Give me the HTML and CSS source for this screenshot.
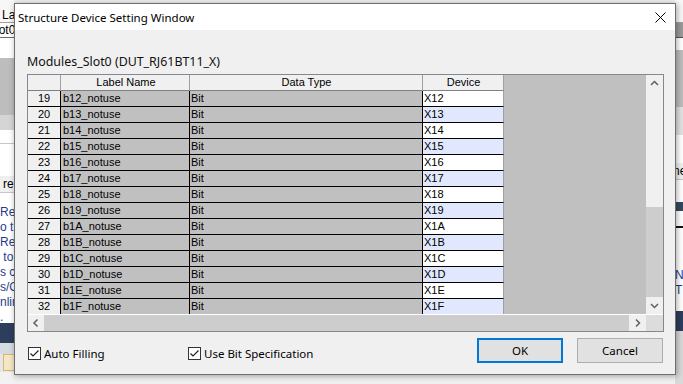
FILE: index.html
```html
<!DOCTYPE html>
<html lang="en">
<head>
  <meta charset="UTF-8">
  <title>Structure Device Setting Window</title>
  <link rel="stylesheet" href="styles.css">
</head>
<body>
  <!-- the application window behind the dialog -->
  <div class="desktop">
    <div class="pane pane-left">
      <div class="bg-head">Lab</div>
      <div class="bg-row shift">Slot0</div>
      <div class="bg-blank h20"></div>
      <div class="bg-gray"></div>
      <div class="bg-light"></div>
      <div class="bg-blank h14 ruled"></div>
      <div class="bg-blank h32"></div>
      <div class="bg-row soft">re</div>
      <div class="bg-notes">
        <p>Res</p>
        <p>o t</p>
        <p>Ref</p>
        <p>&nbsp;to</p>
        <p>s c</p>
        <p>s/G</p>
        <p>nlin</p>
        <p>.</p>
      </div>
      <div class="bg-navy"></div>
      <div class="bg-bar"></div>
      <div class="bg-toolbar"><span class="bg-btn"></span></div>
      <div class="bg-foot"></div>
    </div>
    <div class="pane pane-right">
      <div class="bg-head"></div>
      <div class="bg-row dark"></div>
      <div class="bg-blank h12"></div>
      <div class="bg-gray"></div>
      <div class="bg-light tall"></div>
      <div class="bg-blank h28"></div>
      <div class="bg-row soft shift2">ne</div>
      <div class="bg-blank h22"></div>
      <div class="bg-chip"></div>
      <div class="bg-blank h17 black"></div>
      <div class="bg-notes right">
        <p>N</p>
        <p>T</p>
      </div>
      <div class="bg-navy"></div>
      <div class="bg-foot gray"></div>
    </div>
  </div>

  <div class="dialog">
    <div class="titlebar">
      <span class="title">Structure Device Setting Window</span>
      <svg class="close" width="11" height="11" viewBox="0 0 11 11">
        <path d="M0.5 0.5 L10.5 10.5 M10.5 0.5 L0.5 10.5" stroke="#000" stroke-width="1" fill="none"/>
      </svg>
    </div>

    <div class="dialog-body">
      <div class="caption">Modules_Slot0 (DUT_RJ61BT11_X)</div>

      <div class="grid">
        <div class="grid-main">
          <div class="cells">
            <div class="row head">
              <div class="c rh"></div>
              <div class="c lbl">Label Name</div>
              <div class="c typ">Data Type</div>
              <div class="c dev">Device</div>
            </div>
            <div class="row"><div class="c rh">19</div><div class="c lbl">b12_notuse</div><div class="c typ">Bit</div><div class="c dev">X12</div></div>
            <div class="row"><div class="c rh">20</div><div class="c lbl">b13_notuse</div><div class="c typ">Bit</div><div class="c dev">X13</div></div>
            <div class="row"><div class="c rh">21</div><div class="c lbl">b14_notuse</div><div class="c typ">Bit</div><div class="c dev">X14</div></div>
            <div class="row"><div class="c rh">22</div><div class="c lbl">b15_notuse</div><div class="c typ">Bit</div><div class="c dev">X15</div></div>
            <div class="row"><div class="c rh">23</div><div class="c lbl">b16_notuse</div><div class="c typ">Bit</div><div class="c dev">X16</div></div>
            <div class="row"><div class="c rh">24</div><div class="c lbl">b17_notuse</div><div class="c typ">Bit</div><div class="c dev">X17</div></div>
            <div class="row"><div class="c rh">25</div><div class="c lbl">b18_notuse</div><div class="c typ">Bit</div><div class="c dev">X18</div></div>
            <div class="row"><div class="c rh">26</div><div class="c lbl">b19_notuse</div><div class="c typ">Bit</div><div class="c dev">X19</div></div>
            <div class="row"><div class="c rh">27</div><div class="c lbl">b1A_notuse</div><div class="c typ">Bit</div><div class="c dev">X1A</div></div>
            <div class="row"><div class="c rh">28</div><div class="c lbl">b1B_notuse</div><div class="c typ">Bit</div><div class="c dev">X1B</div></div>
            <div class="row"><div class="c rh">29</div><div class="c lbl">b1C_notuse</div><div class="c typ">Bit</div><div class="c dev">X1C</div></div>
            <div class="row"><div class="c rh">30</div><div class="c lbl">b1D_notuse</div><div class="c typ">Bit</div><div class="c dev">X1D</div></div>
            <div class="row"><div class="c rh">31</div><div class="c lbl">b1E_notuse</div><div class="c typ">Bit</div><div class="c dev">X1E</div></div>
            <div class="row"><div class="c rh">32</div><div class="c lbl">b1F_notuse</div><div class="c typ">Bit</div><div class="c dev">X1F</div></div>
          </div>

          <div class="vscroll">
            <div class="sb-btn">
              <svg width="17" height="17" viewBox="0 0 17 17"><path d="M5 10 L8.5 6.5 L12 10" stroke="#606060" stroke-width="1.5" fill="none"/></svg>
            </div>
            <div class="sb-track v"></div>
            <div class="sb-thumb v"></div>
            <div class="sb-btn">
              <svg width="17" height="17" viewBox="0 0 17 17"><path d="M5 7 L8.5 10.5 L12 7" stroke="#606060" stroke-width="1.5" fill="none"/></svg>
            </div>
          </div>
        </div>

        <div class="hscroll">
          <div class="sb-btn left">
            <svg width="16" height="16" viewBox="0 0 16 16"><path d="M9.5 4.5 L6 8 L9.5 11.5" stroke="#606060" stroke-width="1.5" fill="none"/></svg>
          </div>
          <div class="sb-thumb h"></div>
          <div class="sb-btn">
            <svg width="17" height="16" viewBox="0 0 17 16"><path d="M7 4.5 L10.5 8 L7 11.5" stroke="#606060" stroke-width="1.5" fill="none"/></svg>
          </div>
          <div class="sb-corner"></div>
        </div>
      </div>

      <div class="footer">
        <label class="check first">
          <span class="box">
            <svg width="11" height="11" viewBox="0 0 11 11"><path d="M1.5 5.5 L4 8 L9.5 2.5" stroke="#222" stroke-width="1.2" fill="none"/></svg>
          </span>
          Auto Filling
        </label>
        <label class="check">
          <span class="box">
            <svg width="11" height="11" viewBox="0 0 11 11"><path d="M1.5 5.5 L4 8 L9.5 2.5" stroke="#222" stroke-width="1.2" fill="none"/></svg>
          </span>
          Use Bit Specification
        </label>
        <div class="buttons">
          <button class="btn default">OK</button>
          <button class="btn">Cancel</button>
        </div>
      </div>
    </div>
  </div>
</body>
</html>
```

FILE: styles.css
```css
* {
  box-sizing: border-box;
}
body {
  margin: 0;
  width: 683px;
  height: 384px;
  overflow: hidden;
  position: relative;
  font-family: 'Noto Sans', sans-serif;
  font-size: 12px;
  color: #000;
  background: #f0f0f0;
}

/* background window */
.desktop {
  display: flex;
  justify-content: space-between;
  height: 384px;
}
.pane {
  display: flex;
  flex-direction: column;
  overflow: hidden;
  white-space: nowrap;
  font-family: 'Liberation Sans', sans-serif;
  font-size: 12px;
  background: #fff;
}
.pane-left {
  width: 14px;
}
.pane-right {
  width: 8px;
}
.bg-head {
  height: 23px;
  padding: 8px 0 0 2px;
  background: #f7f7f7;
  border-bottom: 1px solid #a0a0a0;
}
.bg-row {
  height: 15px;
  line-height: 14px;
  border-bottom: 1px solid #6e6e6e;
}
.bg-row.shift {
  text-indent: -12px;
}
.bg-row.dark {
  background: #9a9a9a;
  border-bottom-color: #505050;
}
.bg-row.soft {
  height: 17px;
  line-height: 16px;
  padding-left: 3px;
  background: #f0f0f0;
  border-bottom-color: #c8c8c8;
}
.bg-row.shift2 {
  padding-left: 0;
  text-indent: -2px;
}
.bg-blank {
  background: #fff;
}
.h12 { height: 12px; }
.h14 { height: 14px; }
.h17 { height: 17px; }
.h20 { height: 20px; }
.h22 { height: 22px; }
.h28 { height: 28px; }
.h32 { height: 32px; }
.ruled {
  border-bottom: 1px solid #c8c8c8;
}
.black {
  border-bottom: 2px solid #111;
}
.bg-gray {
  height: 57px;
  background: #bdbdbd;
}
.bg-light {
  height: 15px;
  background: #d5d5d5;
}
.bg-light.tall {
  height: 28px;
  background: #e2e2e2;
}
.bg-chip {
  height: 9px;
  background: #34495e;
}
.bg-notes {
  height: 130px;
  padding-top: 12px;
  color: #1d3c8c;
  background: #fff;
}
.bg-notes p {
  margin: 0;
  height: 15px;
  line-height: 15px;
}
.bg-notes.right {
  height: 83px;
  padding-top: 40px;
}
.bg-navy {
  height: 20px;
  background: #2c3e5c;
}
.bg-bar {
  height: 11px;
  background: #d5dae3;
}
.bg-toolbar {
  height: 18px;
  padding-left: 3px;
  background: #e4e6ea;
}
.bg-btn {
  display: block;
  width: 40px;
  height: 17px;
  background: #f5e7c3;
  border: 1px solid #d9b86c;
}
.bg-foot {
  flex: 1;
  background: #f2f2f2;
}
.bg-foot.gray {
  background: #d9d9d9;
}

/* dialog window */
.dialog {
  position: absolute;
  left: 14px;
  top: 3px;
  width: 662px;
  height: 372px;
  display: flex;
  flex-direction: column;
  background: #f0f0f0;
  border: 1px solid #6f6f6f;
  box-shadow: 1px 1px 6px rgba(0, 0, 0, 0.35);
}
.titlebar {
  height: 26px;
  display: flex;
  align-items: center;
  justify-content: space-between;
  padding: 0 9px 0 3px;
  background: #fff;
}
.title {
  font-size: 11.5px;
}
.dialog-body {
  flex: 1;
  padding: 0 11px 0 12px;
}
.caption {
  margin-top: 24px;
  height: 16px;
  line-height: 16px;
  margin-bottom: 4px;
  font-size: 12.4px;
  color: #111;
}

/* data grid */
.grid {
  height: 258px;
  border: 1px solid #828790;
  display: flex;
  flex-direction: column;
}
.grid-main {
  display: flex;
  height: 239px;
}
.cells {
  flex: 1;
  overflow: hidden;
  background: #c0c0c0;
  font-family: 'Liberation Sans', sans-serif;
  font-size: 11px;
}
.row {
  display: flex;
}
.c {
  height: 16px;
  line-height: 15px;
  padding-left: 1px;
  border-right: 1px solid #000;
  border-bottom: 1px solid #000;
  overflow: hidden;
  white-space: nowrap;
}
.rh {
  width: 33px;
  padding-left: 0;
  text-align: center;
  background: #f0f0f0;
}
.lbl {
  width: 129px;
  padding-left: 2px;
  background: #c0c0c0;
}
.typ {
  width: 233px;
  background: #c0c0c0;
}
.dev {
  width: 81px;
  background: #fff;
  border-right-color: #a0a0a0;
}
.row:nth-child(odd) .dev {
  background: #e1e8fd;
}
.row.head .c {
  background: #f0f0f0;
  text-align: center;
  border-right-color: #a0a0a0;
  border-bottom-color: #808080;
}

/* scroll bars */
.vscroll {
  width: 17px;
  display: flex;
  flex-direction: column;
  background: #f0f0f0;
}
.sb-btn {
  height: 17px;
  width: 17px;
  display: flex;
  background: #f0f0f0;
}
.sb-btn.left {
  width: 16px;
}
.sb-track.v {
  height: 115px;
}
.sb-thumb {
  background: #cdcdcd;
}
.sb-thumb.v {
  height: 90px;
}
.hscroll {
  height: 17px;
  display: flex;
  border-top: 1px solid #fff;
  background: #f0f0f0;
}
.hscroll .sb-btn {
  height: 16px;
}
.sb-thumb.h {
  flex: 1;
}
.sb-corner {
  width: 17px;
  background: #dcdcdc;
}

/* footer */
.footer {
  display: flex;
  align-items: flex-start;
  margin-top: 6px;
}
.check {
  display: flex;
  align-items: center;
  gap: 3px;
  height: 13px;
  margin-top: 9px;
  font-size: 11.5px;
}
.check.first {
  width: 160px;
  margin-left: 1px;
}
.box {
  width: 13px;
  height: 13px;
  display: flex;
  align-items: center;
  justify-content: center;
  border: 1px solid #333;
  background: #fff;
}
.buttons {
  display: flex;
  gap: 14px;
  margin-left: auto;
  margin-right: 1px;
}
.btn {
  width: 86px;
  height: 25px;
  padding: 0;
  font-family: 'Noto Sans', sans-serif;
  font-size: 11.5px;
  color: #000;
  background: #e1e1e1;
  border: 1px solid #adadad;
}
.btn.default {
  border: 2px solid #0078d7;
}
```
